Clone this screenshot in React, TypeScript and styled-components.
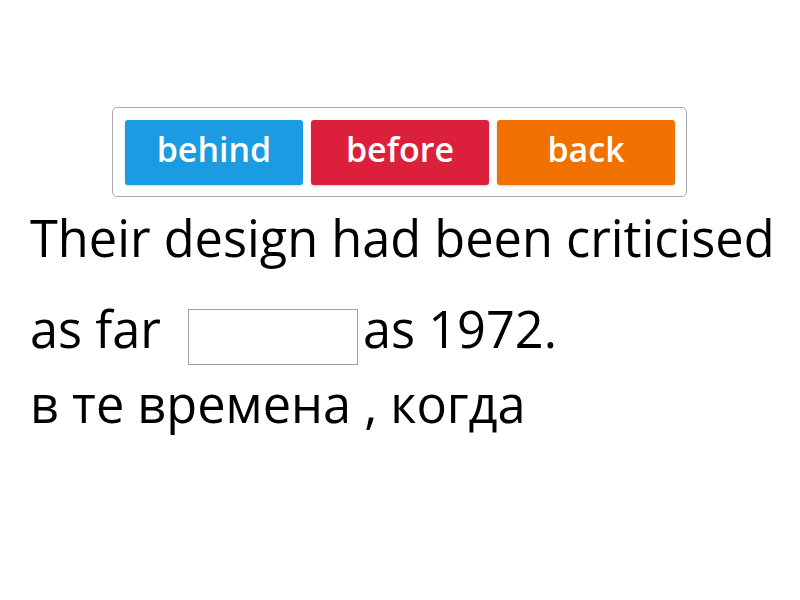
import React from "react";
import styled, { createGlobalStyle } from "styled-components";

const Global = createGlobalStyle`
  html, body {
    margin: 0;
    padding: 0;
    background: #fff;
  }
  body {
    font-family: "Open Sans", "Noto Sans", sans-serif;
  }
`;

const Page = styled.div`
  width: 800px;
  height: 600px;
  padding-top: 107px;
  box-sizing: border-box;
`;

const Tray = styled.div`
  margin-left: 112px;
  width: 575px;
  height: 90px;
  box-sizing: border-box;
  border: 1px solid #a8a8a8;
  border-radius: 5px;
  display: flex;
  gap: 8px;
  padding: 12px 0 0 12px;
`;

const Tile = styled.div<{ $bg: string }>`
  width: 178px;
  height: 65px;
  border-radius: 3px;
  background: ${(p) => p.$bg};
  box-shadow: 0 1px 2px rgba(0, 0, 0, 0.2);
  color: #fff;
  font-weight: 600;
  font-size: 34px;
  display: flex;
  align-items: center;
  justify-content: center;
  padding-bottom: 7px;
  box-sizing: border-box;
`;

const Text = styled.div`
  margin-left: 30px;
  font-size: 50.5px;
  color: #000;
`;

const Line = styled.div<{ $h: number }>`
  height: ${(p) => p.$h}px;
  display: flex;
  align-items: flex-end;
  white-space: nowrap;
`;

const Gap = styled.span`
  display: inline-block;
  width: 170px;
  height: 56px;
  box-sizing: border-box;
  border: 1px solid #a0a0a0;
  margin: 0 5px 0 27px;
  position: relative;
  top: 2px;
`;

const tiles = [
  { word: "behind", bg: "#1b9be1" },
  { word: "before", bg: "#dc1f3b" },
  { word: "back", bg: "#f07100" },
];

export default function App() {
  return (
    <Page>
      <Global />
      <Tray>
        {tiles.map((t) => (
          <Tile key={t.word} $bg={t.bg}>
            {t.word}
          </Tile>
        ))}
      </Tray>
      <Text>
        <Line $h={75}>Their design had been criticised</Line>
        <Line $h={91}>
          as far<Gap />as 1972.
        </Line>
        <Line $h={75}>в те времена , когда</Line>
      </Text>
    </Page>
  );
}
